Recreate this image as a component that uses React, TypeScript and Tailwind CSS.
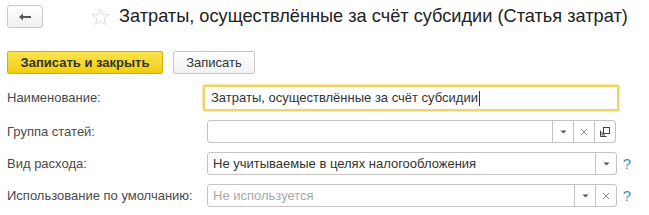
import React from "react";

const Arrow = () => (
  <svg width="7" height="4" viewBox="0 0 7 4">
    <path d="M0.5 0.5 L6.5 0.5 L3.5 3.5 Z" fill="#555" />
  </svg>
);

const Cross = () => (
  <svg width="8" height="8" viewBox="0 0 8 8">
    <path d="M1 1 L7 7 M7 1 L1 7" stroke="#888" strokeWidth="1" />
  </svg>
);

const OpenIcon = () => (
  <svg width="12" height="12" viewBox="0 0 12 12">
    <rect x="4.5" y="1.5" width="6" height="6" fill="none" stroke="#444" strokeWidth="1" />
    <path d="M1.5 4.5 V10.5 H7.5" fill="none" stroke="#444" strokeWidth="1" />
    <path d="M3 6 V9 H6" fill="none" stroke="#444" strokeWidth="1" />
  </svg>
);

function FieldButton({ children }: { children: React.ReactNode }) {
  return (
    <div className="w-[21px] h-full border-l border-[#c4c4c4] flex items-center justify-center shrink-0">
      {children}
    </div>
  );
}

function Help() {
  return (
    <span className="w-[20px] text-center text-[15px] text-[#3b8db5] leading-none">?</span>
  );
}

export default function App() {
  return (
    <div
      className="w-[649px] h-[215px] bg-white overflow-hidden text-[#333]"
      style={{ fontFamily: '"Liberation Sans", Arial, sans-serif' }}
    >
      <div className="flex items-center pt-[5px] pl-[7px]">
        <button className="w-[36px] h-[23px] rounded-[3px] border border-[#c8c8c8] bg-gradient-to-b from-white to-[#f0f0f0] flex items-center justify-center">
          <svg width="14" height="10" viewBox="0 0 14 10">
            <path d="M1 5 L5 1.5 V4 H13 V6 H5 V8.5 Z" fill="#555" />
          </svg>
        </button>
        <svg className="ml-[48px]" width="19" height="18" viewBox="0 0 20 19">
          <path
            d="M10 1 L12.4 7 L18.8 7.3 L13.8 11.3 L15.5 17.6 L10 14 L4.5 17.6 L6.2 11.3 L1.2 7.3 L7.6 7 Z"
            fill="none"
            stroke="#d9d9d9"
            strokeWidth="1"
          />
        </svg>
        <h1 className="ml-[9px] text-[18.2px] text-[#222] leading-none">
          Затраты, осуществлённые за счёт субсидии (Статья затрат)
        </h1>
      </div>

      <div className="flex gap-[10px] mt-[23px] pl-[7px]">
        <button className="w-[156px] h-[23px] rounded-[2px] border border-[#d4b000] bg-gradient-to-b from-[#fbe44a] to-[#f1cd00] text-[13px] font-bold text-[#333]">
          Записать и закрыть
        </button>
        <button className="w-[82px] h-[23px] rounded-[2px] border border-[#c8c8c8] bg-gradient-to-b from-white to-[#f1f1f1] text-[13px] text-[#333]">
          Записать
        </button>
      </div>

      <div className="mt-[11px] pl-[7px] flex flex-col gap-[9px] text-[13px]">
        <div className="flex items-center h-[26px]">
          <span className="w-[196px] text-[#4a4a4a]">Наименование:</span>
          <div className="w-[416px] h-[26px] rounded-[2px] border-2 border-[#efd565] shadow-[0_0_0_1px_#f7eaa8] flex items-center pl-[6px] text-[#333]">
            Затраты, осуществлённые за счёт субсидии
            <span className="w-px h-[15px] bg-[#333] ml-px" />
          </div>
        </div>

        <div className="flex items-center h-[23px]">
          <span className="w-[200px] text-[#4a4a4a]">Группа статей:</span>
          <div className="w-[409px] h-[23px] rounded-[3px] border border-[#c4c4c4] flex items-center">
            <div className="flex-1" />
            <FieldButton>
              <Arrow />
            </FieldButton>
            <FieldButton>
              <Cross />
            </FieldButton>
            <FieldButton>
              <OpenIcon />
            </FieldButton>
          </div>
        </div>

        <div className="flex items-center h-[23px]">
          <span className="w-[200px] text-[#4a4a4a]">Вид расхода:</span>
          <div className="w-[410px] h-[23px] rounded-[3px] border border-[#c4c4c4] flex items-center">
            <div className="flex-1 pl-[5px] text-[#333]">Не учитываемые в целях налогообложения</div>
            <FieldButton>
              <Arrow />
            </FieldButton>
          </div>
          <Help />
        </div>

        <div className="flex items-center h-[23px]">
          <span className="w-[200px] text-[#4a4a4a]">Использование по умолчанию:</span>
          <div className="w-[410px] h-[23px] rounded-[3px] border border-[#c4c4c4] flex items-center">
            <div className="flex-1 pl-[5px] text-[#a8a8a8]">Не используется</div>
            <FieldButton>
              <Arrow />
            </FieldButton>
            <FieldButton>
              <Cross />
            </FieldButton>
          </div>
          <Help />
        </div>
      </div>
    </div>
  );
}
